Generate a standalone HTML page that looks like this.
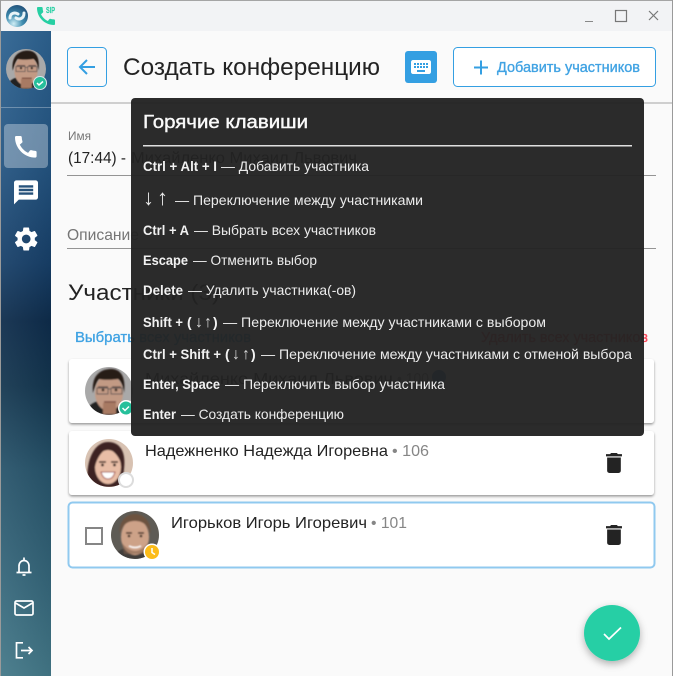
<!DOCTYPE html>
<html><head><meta charset="utf-8"><style>
html,body{margin:0;padding:0;width:673px;height:676px;overflow:hidden;background:#fafafa}
svg{display:block}
text{font-family:"Liberation Sans",sans-serif}
.k{font-size:14px;font-weight:bold;fill:#f2f2f2}
.d{font-size:14px;fill:#ececec}
.a{font-size:16px;fill:#d8d8d8}
</style></head><body>
<svg width="673" height="676" viewBox="0 0 673 676" xmlns="http://www.w3.org/2000/svg">
<defs>
<linearGradient id="side" x1="0" y1="0" x2="0" y2="1">
<stop offset="0" stop-color="#2d6290"/><stop offset=".2" stop-color="#245582"/><stop offset=".36" stop-color="#173f68"/><stop offset=".45" stop-color="#0e2c4b"/><stop offset=".55" stop-color="#14364f"/><stop offset=".68" stop-color="#27536a"/><stop offset=".85" stop-color="#35667a"/><stop offset="1" stop-color="#437888"/>
</linearGradient>
<linearGradient id="sideH" x1="0" y1="0" x2="1" y2="0"><stop offset="0" stop-color="#fff" stop-opacity=".06"/><stop offset="1" stop-color="#000" stop-opacity=".06"/></linearGradient>
<radialGradient id="logo" cx=".35" cy=".85" r=".9"><stop offset="0" stop-color="#cfeef5"/><stop offset=".45" stop-color="#3f8db0"/><stop offset="1" stop-color="#1f4e78"/></radialGradient>
<filter id="sh" x="-5%" y="-10%" width="110%" height="125%"><feDropShadow dx="0" dy="1.5" stdDeviation="1.2" flood-color="#000" flood-opacity=".4"/></filter>
<filter id="fs" x="-30%" y="-30%" width="160%" height="170%"><feDropShadow dx="0" dy="3" stdDeviation="4" flood-color="#000" flood-opacity=".3"/></filter>
<filter id="b1"><feGaussianBlur stdDeviation=".7"/></filter>
<clipPath id="c1"><circle cx="0" cy="0" r="24"/></clipPath>
<g id="man1" clip-path="url(#c1)">
<rect x="-24" y="-24" width="48" height="48" fill="#a9a9a9"/>
<g filter="url(#b1)">
<path d="M-24 24C-22 13-14 11-8 9H8C14 11 20 14 24 24Z" fill="#202022"/>
<ellipse cx="0" cy="2" rx="14" ry="18" fill="#c29a84"/>
<rect x="-6" y="12" width="13" height="11" fill="#a87a64"/>
<path d="M-16 2C-18-16-8-22 2-22C12-22 17-14 15 2C14-5 12-10 9-12C2-11-6-11-10-12C-13-8-14-4-16 2Z" fill="#261b17"/>
<circle cx="-6" cy="-1" r="1.400" fill="#33261f"/><circle cx="7" cy="-1" r="1.400" fill="#33261f"/>
<path d="M-11-4H-1M3-4H12" stroke="#5b4a44" stroke-width="1.300"/>
<path d="M-12-3H-1V3H-12ZM2-3H13V3H2ZM-1-2H2" fill="none" stroke="#5c5452" stroke-width=".9"/>
<path d="M-5 11H7" stroke="#7a4c40" stroke-width="1.500"/>
</g></g>
<g id="wom" clip-path="url(#c1)">
<rect x="-24" y="-24" width="48" height="48" fill="#d8c2b2"/>
<g filter="url(#b1)">
<path d="M-20 24C-25 4-17-21 -1-21C12-21 17-10 15 6L13 24Z" fill="#3d2422"/>
<ellipse cx="-1" cy="4" rx="13" ry="17" fill="#e8bda6"/>
<path d="M-14 4C-12-6-6-13-1-15C5-12 11-6 13 4C14-8 10-20-1-20C-11-20-15-8-14 4Z" fill="#3d2422"/>
<path d="M-10-1H-3M2-1H9" stroke="#35231f" stroke-width="1.400"/>
<circle cx="-6.500" cy="2" r="1.400" fill="#2c1c18"/><circle cx="5.500" cy="2" r="1.400" fill="#2c1c18"/>
<path d="M-8 9H6Q4 16-1 16T-8 9Z" fill="#fff" stroke="#a3504d" stroke-width="1"/>
</g></g>
<g id="man2" clip-path="url(#c1)">
<rect x="-24" y="-24" width="48" height="48" fill="#5e5b55"/>
<g filter="url(#b1)">
<path d="M-24 24C-20 16-12 14-7 12H7C12 14 20 16 24 24Z" fill="#3f3d3b"/>
<ellipse cx="0" cy="2" rx="14" ry="18" fill="#cda288"/>
<path d="M-15-1C-17-14-8-21 0-21C8-21 17-14 15-1C13-10 8-14 0-14C-8-14-13-10-15-1Z" fill="#6d5240"/>
<path d="M-9-2H-3M3-2H9" stroke="#3d2b22" stroke-width="1.500"/>
<circle cx="-6" cy="1" r="1.300" fill="#33251d"/><circle cx="6" cy="1" r="1.300" fill="#33251d"/>
<path d="M-13 8Q0 24 13 8L11 19H-11Z" fill="#7d5c48" opacity=".55"/>
<path d="M-6 11Q0 14 6 11" stroke="#fff" stroke-width="1.500" fill="none"/>
</g></g>
</defs>

<rect width="673" height="676" fill="#fafafa"/>
<!-- titlebar -->
<rect x="0" y="0" width="673" height="31" fill="#f2f3f5"/>
<rect x="0" y="0" width="673" height="1" fill="#a5a5a5"/>
<circle cx="17" cy="16" r="11" fill="url(#logo)"/>
<path d="M10 18C10 13 15 12 18 14M24 13C24 19 19 20 16 18" stroke="#e8f4f8" stroke-width="3" fill="none" stroke-linecap="round"/>
<path fill="#26cfa3" transform="translate(34 4)" d="M20.010 15.380c-1.230 0-2.420-.2-3.530-.56-.35-.12-.74-.03-1.010.24l-1.570 1.970c-2.830-1.350-5.480-3.900-6.890-6.830l1.950-1.660c.27-.28.35-.67.24-1.020-.37-1.110-.56-2.300-.56-3.530 0-.54-.45-.99-.99-.99H4.190C3.650 3 3 3.240 3 3.990 3 13.280 10.730 21 20.010 21c.71 0 .99-.63.99-1.180v-3.450c0-.54-.45-.99-.99-.99z"/>
<text x="46" y="13" font-size="8" font-weight="bold" fill="#26cfa3" stroke="#26cfa3" stroke-width=".2" textLength="9" lengthAdjust="spacingAndGlyphs">SIP</text>
<rect x="585" y="21" width="8" height="1" fill="#888"/>
<rect x="615.500" y="10.500" width="11" height="11" fill="none" stroke="#777" stroke-width="1.200"/>
<path d="M649 11L658 20M658 11L649 20" stroke="#777" stroke-width="1.200"/>

<!-- sidebar -->
<rect x="1" y="31" width="50" height="645" fill="url(#side)"/>
<rect x="1" y="31" width="50" height="645" fill="url(#sideH)"/>
<rect x="0" y="0" width="1" height="676" fill="#9a9a9a"/>
<rect x="672" y="0" width="1" height="676" fill="#9a9a9a"/>
<g transform="translate(26 69) scale(.833)"><use href="#man1"/></g>
<circle cx="40" cy="83" r="6.500" fill="#26c09b" stroke="#d9e7ea" stroke-width="1"/>
<path d="M37 83l2 2 4-3.500" stroke="#fff" stroke-width="1.500" fill="none"/>
<rect x="1" y="107" width="50" height="1" fill="#fff" fill-opacity=".3"/>
<rect x="4" y="124" width="44" height="44" rx="4" fill="#fff" fill-opacity=".33"/>
<g fill="#fff">
<path transform="translate(11.400 132.400) scale(1.200)" d="M20.010 15.380c-1.230 0-2.420-.2-3.530-.56-.35-.12-.74-.03-1.010.24l-1.570 1.970c-2.830-1.350-5.480-3.900-6.890-6.830l1.950-1.660c.27-.28.35-.67.24-1.020-.37-1.110-.56-2.300-.56-3.530 0-.54-.45-.99-.99-.99H4.190C3.650 3 3 3.240 3 3.990 3 13.280 10.730 21 20.010 21c.71 0 .99-.63.99-1.180v-3.450c0-.54-.45-.99-.99-.99z"/>
<path transform="translate(11.600 178) scale(1.200)" d="M20 2H4c-1.100 0-1.990.9-1.990 2L2 22l4-4h14c1.100 0 2-.9 2-2V4c0-1.100-.9-2-2-2zM18 14H6v-2h12v2zm0-3H6V9h12v2zm0-3H6V6h12v2z"/>
<path transform="translate(11.800 224.600) scale(1.200)" d="M19.140 12.940c.04-.3.06-.61.06-.94 0-.32-.02-.64-.07-.94l2.030-1.580c.18-.14.23-.41.12-.61l-1.920-3.320c-.12-.22-.37-.29-.59-.22l-2.390.96c-.5-.38-1.030-.7-1.620-.94l-.36-2.540c-.04-.24-.24-.41-.48-.41h-3.840c-.24 0-.43.17-.47.41l-.36 2.540c-.59.24-1.130.57-1.620.94l-2.390-.96c-.22-.08-.47 0-.59.22L2.740 8.870c-.12.21-.08.47.12.61l2.030 1.580c-.05.3-.09.63-.09.94s.02.64.07.94l-2.030 1.580c-.18.14-.23.41-.12.61l1.920 3.320c.12.22.37.29.59.22l2.390-.96c.5.38 1.030.7 1.620.94l.36 2.540c.05.24.24.41.48.41h3.840c.24 0 .44-.17.47-.41l.36-2.540c.59-.24 1.130-.56 1.620-.94l2.390.96c.22.08.47 0 .59-.22l1.920-3.320c.12-.22.07-.47-.12-.61l-2.010-1.580zM12 15.600c-1.980 0-3.600-1.620-3.600-3.600s1.620-3.600 3.600-3.600 3.600 1.620 3.600 3.600-1.620 3.600-3.600 3.600z"/>
</g>
<g fill="none" stroke="#fff" stroke-width="1.700">
<path d="M16.500 572.500h15M19 572V566c0-3 2-5.500 5-5.500s5 2.500 5 5.500v6" stroke-linejoin="round"/>
<path d="M24 557.500v2.500M22.500 575h3"/>
<rect x="15" y="601" width="18" height="14" rx="1.500"/>
<path d="M15.500 603l8.500 5 8.500-5"/>
<path d="M23 642.800h-6.500v15H23M21 650.500h11M28.500 647l3.500 3.500-3.500 3.500"/>
</g>

<!-- header -->
<rect x="67.500" y="47.500" width="39" height="39" rx="4" fill="none" stroke="#349fe2"/>
<path d="M95 67H81M87 60l-7 7 7 7" fill="none" stroke="#349fe2" stroke-width="2"/>
<text x="123" y="75" font-size="24" fill="#232323" textLength="257" lengthAdjust="spacingAndGlyphs">Создать конференцию</text>
<rect x="405" y="51" width="32" height="32" rx="3" fill="#349fe2"/>
<path fill="#fff" transform="translate(409 55)" d="M20 5H4c-1.100 0-1.990.9-1.990 2L2 17c0 1.100.9 2 2 2h16c1.100 0 2-.9 2-2V7c0-1.100-.9-2-2-2zm-9 3h2v2h-2V8zm0 3h2v2h-2v-2zM8 8h2v2H8V8zm0 3h2v2H8v-2zm-1 2H5v-2h2v2zm0-3H5V8h2v2zm9 7H8v-2h8v2zm0-4h-2v-2h2v2zm0-3h-2V8h2v2zm3 3h-2v-2h2v2zm0-3h-2V8h2v2z"/>
<rect x="453.500" y="47.500" width="202" height="39" rx="4" fill="#fff" stroke="#349fe2"/>
<path d="M474 67.500h14M481 60.500v14" stroke="#349fe2" stroke-width="2"/>
<text x="497" y="72" font-size="14.500" fill="#41a3e3" stroke="#41a3e3" stroke-width=".35" textLength="143" lengthAdjust="spacingAndGlyphs">Добавить участников</text>
<rect x="51" y="102" width="621" height="2" fill="#cfcfcf"/>

<!-- form -->
<text x="68" y="140" font-size="12" fill="#767676" textLength="23" lengthAdjust="spacingAndGlyphs">Имя</text>
<text x="68" y="163" font-size="16" fill="#232323" textLength="58" lengthAdjust="spacingAndGlyphs">(17:44) -</text>
<text x="131" y="163" font-size="16" fill="#232323" textLength="226" lengthAdjust="spacingAndGlyphs">Михайленко Михаил Львович</text>
<rect x="67" y="175" width="589" height="1" fill="#949494"/>
<text x="67" y="240" font-size="16" fill="#757575" textLength="72" lengthAdjust="spacingAndGlyphs">Описание</text>
<rect x="67" y="248" width="589" height="1" fill="#949494"/>
<text x="68" y="300" font-size="22" fill="#232323" textLength="152" lengthAdjust="spacingAndGlyphs">Участники (3)</text>
<text x="75" y="342" font-size="14.500" fill="#41a3e3" stroke="#41a3e3" stroke-width=".35" textLength="176" lengthAdjust="spacingAndGlyphs">Выбрать всех участников</text>
<text x="481" y="342" font-size="14.500" fill="#fb4a5c" stroke="#fb4a5c" stroke-width=".3" textLength="167" lengthAdjust="spacingAndGlyphs">Удалить всех участников</text>

<!-- cards -->
<rect x="69" y="359" width="585" height="64" rx="3" fill="#fff" filter="url(#sh)"/>
<g transform="translate(109 391)"><use href="#man1"/></g>
<circle cx="126" cy="408" r="8" fill="#fff"/><circle cx="126" cy="408" r="6.500" fill="#26c09b"/>
<path d="M122.500 408l2.500 2.500 4-4" stroke="#fff" stroke-width="1.500" fill="none"/>
<text x="145" y="384" font-size="16" fill="#232323" textLength="248" lengthAdjust="spacingAndGlyphs">Михайленко Михаил Львович</text>
<text x="397" y="384" font-size="16" fill="#757575" textLength="32" lengthAdjust="spacingAndGlyphs">• 100</text>
<circle cx="439" cy="377" r="7" fill="#2f80c0"/>

<rect x="69" y="431" width="585" height="64" rx="3" fill="#fff" filter="url(#sh)"/>
<g transform="translate(109 463)"><use href="#wom"/></g>
<circle cx="126" cy="480" r="7" fill="#fff" stroke="#dcdcdc" stroke-width="2"/>
<text x="145" y="456" font-size="16" fill="#232323" textLength="243" lengthAdjust="spacingAndGlyphs">Надежненко Надежда Игоревна</text>
<text x="392" y="456" font-size="16" fill="#868686" textLength="37" lengthAdjust="spacingAndGlyphs">• 106</text>
<path fill="#232323" transform="translate(600.300 449.700) scale(1.140 1.110)" d="M6 19c0 1.100.9 2 2 2h8c1.100 0 2-.9 2-2V7H6v12zM19 4h-3.500l-1-1h-5l-1 1H5v2h14V4z"/>

<rect x="68.500" y="502.500" width="586" height="65" rx="4" fill="#fff" stroke="#90c9ef" stroke-width="2"/>
<rect x="86" y="528" width="16" height="16" fill="none" stroke="#868686" stroke-width="2"/>
<g transform="translate(135 535)"><use href="#man2"/></g>
<circle cx="152" cy="552" r="8.500" fill="#fff"/><circle cx="152" cy="552" r="7" fill="#fcbc19"/>
<path d="M152 548v4.500l3 2" stroke="#fff" stroke-width="1.500" fill="none"/>
<text x="171" y="528" font-size="16" fill="#232323" textLength="196" lengthAdjust="spacingAndGlyphs">Игорьков Игорь Игоревич</text>
<text x="371" y="528" font-size="16" fill="#868686" textLength="36" lengthAdjust="spacingAndGlyphs">• 101</text>
<path fill="#232323" transform="translate(600.300 521.700) scale(1.140 1.110)" d="M6 19c0 1.100.9 2 2 2h8c1.100 0 2-.9 2-2V7H6v12zM19 4h-3.500l-1-1h-5l-1 1H5v2h14V4z"/>

<!-- FAB -->
<circle cx="612" cy="633" r="28" fill="#28cfa5" filter="url(#fs)"/>
<path d="M604 634l5 5 12-11.500" fill="none" stroke="#fff" stroke-width="1.700"/>

<!-- popup -->
<rect x="131" y="98" width="513" height="338" rx="4" fill="#222" fill-opacity=".96"/>
<text x="143" y="128" font-size="18.500" fill="#fafafa" stroke="#fafafa" stroke-width=".4" textLength="165" lengthAdjust="spacingAndGlyphs">Горячие клавиши</text>
<rect x="143" y="145" width="489" height="1.500" fill="#e0e0e0"/>

<text class="k" x="143" y="171" textLength="74" lengthAdjust="spacingAndGlyphs">Ctrl + Alt + I</text>
<text class="d" x="221" y="171" textLength="148" lengthAdjust="spacingAndGlyphs">— Добавить участника</text>
<text x="143" y="205" font-size="22" fill="#e8e8e8">↓</text>
<text x="157" y="205" font-size="22" fill="#e8e8e8">↑</text>
<text class="d" x="175" y="205" textLength="248" lengthAdjust="spacingAndGlyphs">— Переключение между участниками</text>
<text class="k" x="143" y="235" textLength="46" lengthAdjust="spacingAndGlyphs">Ctrl + A</text>
<text class="d" x="194" y="235" textLength="182" lengthAdjust="spacingAndGlyphs">— Выбрать всех участников</text>
<text class="k" x="143" y="265" textLength="45" lengthAdjust="spacingAndGlyphs">Escape</text>
<text class="d" x="193" y="265" textLength="124" lengthAdjust="spacingAndGlyphs">— Отменить выбор</text>
<text class="k" x="143" y="295" textLength="40" lengthAdjust="spacingAndGlyphs">Delete</text>
<text class="d" x="188" y="295" textLength="168" lengthAdjust="spacingAndGlyphs">— Удалить участника(-ов)</text>
<text class="k" x="143" y="327" textLength="40" lengthAdjust="spacingAndGlyphs">Shift +</text>
<text class="k" x="187" y="327">(</text><text class="a" x="195" y="327">↓</text><text class="a" x="204" y="327">↑</text><text class="k" x="213" y="327">)</text>
<text class="d" x="223" y="327" textLength="323" lengthAdjust="spacingAndGlyphs">— Переключение между участниками с выбором</text>
<text class="k" x="143" y="359" textLength="78" lengthAdjust="spacingAndGlyphs">Ctrl + Shift +</text>
<text class="k" x="225" y="359">(</text><text class="a" x="232" y="359">↓</text><text class="a" x="242" y="359">↑</text><text class="k" x="251" y="359">)</text>
<text class="d" x="261" y="359" textLength="371" lengthAdjust="spacingAndGlyphs">— Переключение между участниками с отменой выбора</text>
<text class="k" x="143" y="389" textLength="77" lengthAdjust="spacingAndGlyphs">Enter, Space</text>
<text class="d" x="225" y="389" textLength="220" lengthAdjust="spacingAndGlyphs">— Переключить выбор участника</text>
<text class="k" x="143" y="419" textLength="33" lengthAdjust="spacingAndGlyphs">Enter</text>
<text class="d" x="181" y="419" textLength="163" lengthAdjust="spacingAndGlyphs">— Создать конференцию</text>
</svg>
</body></html>
